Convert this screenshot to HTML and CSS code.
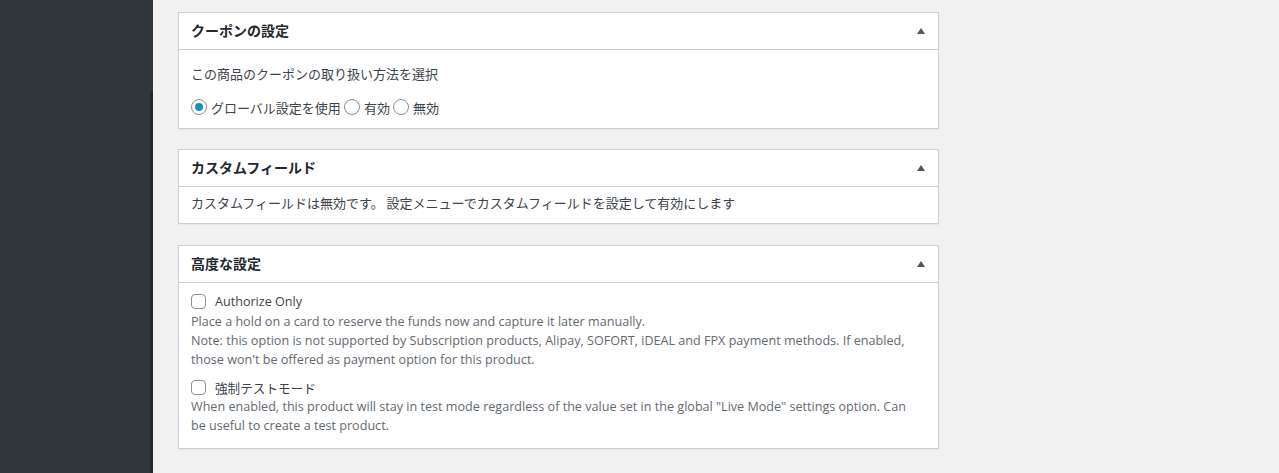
FILE: index.html
```html
<!DOCTYPE html>
<html lang="ja">
<head>
<meta charset="utf-8">
<link rel="stylesheet" href="styles.css">
</head>
<body>
<div class="layout">
  <aside class="sidebar"><div class="strip"></div></aside>
  <main class="content">
    <section class="panel">
      <div class="panel-head"><h2>クーポンの設定</h2><span class="toggle"></span></div>
      <div class="panel-body p1">
        <div class="line">この商品のクーポンの取り扱い方法を選択</div>
        <div class="radios">
          <span class="radio checked"></span><span class="rl">グローバル設定を使用</span>
          <span class="radio"></span><span class="rl">有効</span>
          <span class="radio"></span><span class="rl">無効</span>
        </div>
      </div>
    </section>
    <section class="panel panel-2">
      <div class="panel-head"><h2>カスタムフィールド</h2><span class="toggle"></span></div>
      <div class="panel-body p2">
        <div class="line">カスタムフィールドは無効です。 設定メニューでカスタムフィールドを設定して有効にします</div>
      </div>
    </section>
    <section class="panel">
      <div class="panel-head"><h2>高度な設定</h2><span class="toggle"></span></div>
      <div class="panel-body p3">
        <div class="check-row"><span class="checkbox"></span><span class="cl">Authorize Only</span></div>
        <div class="desc first">Place a hold on a card to reserve the funds now and capture it later manually.<br>Note: this option is not supported by Subscription products, Alipay, SOFORT, iDEAL and FPX payment methods. If enabled, those won't be offered as payment option for this product.</div>
        <div class="check-row second"><span class="checkbox"></span><span class="cl">強制テストモード</span></div>
        <div class="desc">When enabled, this product will stay in test mode regardless of the value set in the global "Live Mode" settings option. Can be useful to create a test product.</div>
      </div>
    </section>
  </main>
</div>
</body>
</html>
```

FILE: styles.css
```css
* { box-sizing: border-box; }
html, body { margin: 0; padding: 0; }
body {
  background: #f1f1f1;
  font-family: "Open Sans", "Noto Sans CJK JP", sans-serif;
  font-size: 13px;
  color: #444;
  width: 1279px;
  height: 473px;
  overflow: hidden;
}
.layout { display: flex; height: 473px; }
.sidebar {
  width: 153px;
  flex: none;
  background: #32373c;
  position: relative;
}
.strip {
  position: absolute;
  right: 0;
  top: 92px;
  bottom: 0;
  width: 3px;
  background: #23282d;
}
.content {
  padding: 12px 0 0 25px;
  width: 786px;
}
.panel {
  background: #fff;
  border: 1px solid #ccd0d4;
  box-shadow: 0 1px 1px rgba(0,0,0,.04);
  margin-bottom: 20px;
}
.panel-2 { margin-bottom: 21px; }
.panel-head {
  height: 37px;
  border-bottom: 1px solid #ccd0d4;
  display: flex;
  align-items: center;
  justify-content: space-between;
  padding: 0 13px 2px 12px;
}
.panel-head h2 {
  margin: 0;
  font-size: 14px;
  font-weight: bold;
  color: #23282d;
  font-family: "Noto Sans CJK JP", sans-serif;
}
.toggle {
  width: 0; height: 0;
  border-left: 4px solid transparent;
  border-right: 4px solid transparent;
  border-bottom: 6px solid #50575e;
  margin-top: 2px;
}
.panel-body { padding: 0 12px; }
.p1 { padding-top: 14px; padding-bottom: 11px; }
.p2 { padding-top: 6px; padding-bottom: 11px; }
.p3 { padding-top: 8px; padding-bottom: 13px; }
.line {
  line-height: 19px;
  font-family: "Noto Sans CJK JP", sans-serif;
  color: #3c434a;
}
.radios {
  margin-top: 14px;
  display: flex;
  align-items: center;
  height: 20px;
  font-family: "Noto Sans CJK JP", sans-serif;
  color: #3c434a;
}
.radio {
  width: 16px; height: 16px;
  border: 1px solid #8c8f94;
  border-radius: 50%;
  margin-right: 4px;
  position: relative;
  flex: none;
}
.radio.checked::after {
  content: "";
  position: absolute;
  left: 3px; top: 3px;
  width: 8px; height: 8px;
  border-radius: 50%;
  background: #1e8cbe;
}
.rl { margin-right: 3px; }
.check-row {
  display: flex;
  align-items: center;
  height: 20px;
  color: #3c434a;
}
.check-row.second { margin-top: 8px; }
.checkbox {
  width: 15px; height: 15px;
  border: 1px solid #8c8f94;
  border-radius: 4px;
  margin-right: 9px;
  flex: none;
}
.cl { font-family: "Open Sans", "Noto Sans CJK JP", sans-serif; font-size: 12.6px; }
.desc {
  font-size: 12.6px;
  line-height: 19px;
  color: #646970;
  margin-right: 12px;
}
.desc.first { margin-top: 1px; }
```
